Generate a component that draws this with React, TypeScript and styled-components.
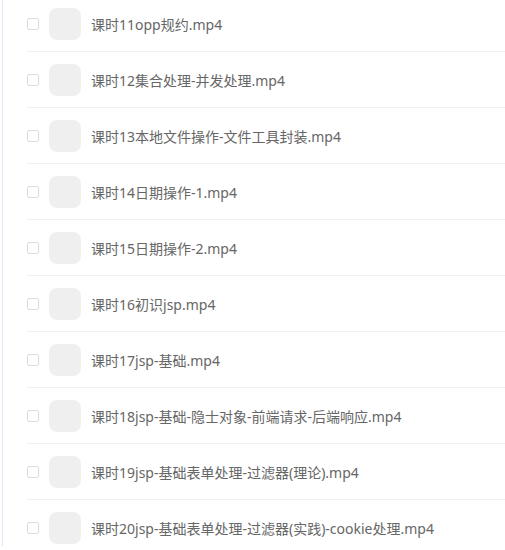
import styled, { createGlobalStyle } from 'styled-components';

const GlobalStyle = createGlobalStyle`
  html, body {
    margin: 0;
    padding: 0;
    background: #fff;
    overflow: hidden;
  }
  body {
    font-family: "Noto Sans", "Noto Sans CJK SC", sans-serif;
  }
`;

const lessons = [
  '课时11opp规约.mp4',
  '课时12集合处理-并发处理.mp4',
  '课时13本地文件操作-文件工具封装.mp4',
  '课时14日期操作-1.mp4',
  '课时15日期操作-2.mp4',
  '课时16初识jsp.mp4',
  '课时17jsp-基础.mp4',
  '课时18jsp-基础-隐士对象-前端请求-后端响应.mp4',
  '课时19jsp-基础表单处理-过滤器(理论).mp4',
  '课时20jsp-基础表单处理-过滤器(实践)-cookie处理.mp4',
];

const App = () => {
  return (
    <>
      <GlobalStyle />
      <Panel>
        <List>
          {lessons.map((name) => (
            <Row key={name}>
              <Check type="checkbox" />
              <Thumb />
              <Name>{name}</Name>
            </Row>
          ))}
        </List>
      </Panel>
    </>
  );
};

const Panel = styled.div`
  height: 550px;
  padding-left: 2px;
`;

const List = styled.ul`
  list-style: none;
  margin: -4px 0 0 0;
  padding: 0 0 0 24px;
  border-left: 1px solid #e3e7f3;
  height: 554px;
`;

const Row = styled.li`
  display: flex;
  align-items: center;
  height: 32px;
  padding: 12px 0 11px;
  border-bottom: 1px solid #f0f0f0;
`;

const Check = styled.input`
  appearance: none;
  width: 12px;
  height: 12px;
  margin: 0 10px 0 0;
  border: 1px solid #dcdcdc;
  border-radius: 2px;
  background: #fff;
  box-sizing: border-box;
`;

const Thumb = styled.div`
  width: 32px;
  height: 32px;
  border-radius: 8px;
  background: #efefef;
  margin-right: 10px;
  flex-shrink: 0;
`;

const Name = styled.span`
  font-size: 14px;
  color: #666;
  white-space: nowrap;
`;

export default App;
